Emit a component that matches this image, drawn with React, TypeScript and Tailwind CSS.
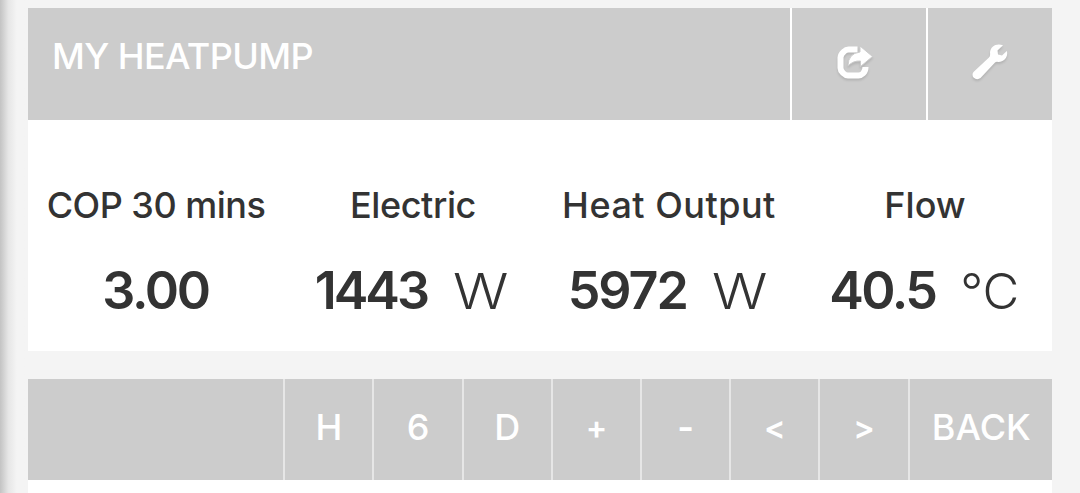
interface Reading {
  label: string;
  labelClass: string;
  value: string;
  valueClass: string;
  unit?: string;
  unitClass?: string;
}

const readings: Reading[] = [
  { label: 'COP 30 mins', labelClass: 'tracking-[-0.5px]', value: '3.00', valueClass: 'tracking-[-2.3px] pr-px' },
  {
    label: 'Electric',
    labelClass: 'tracking-[-0.4px] pl-[2px]',
    value: '1443',
    valueClass: 'tracking-[-3px]',
    unit: 'W',
    unitClass: 'ml-[30px] mr-[5px] scale-x-[1.17]',
  },
  {
    label: 'Heat Output',
    labelClass: 'tracking-[0.5px] pl-[2px]',
    value: '5972',
    valueClass: 'tracking-[-2px]',
    unit: 'W',
    unitClass: 'ml-[29px] mr-[5px] scale-x-[1.17]',
  },
  {
    label: 'Flow',
    labelClass: 'pl-[2px]',
    value: '40.5',
    valueClass: 'tracking-[-2.5px]',
    unit: '°C',
    unitClass: 'ml-[26px] scale-x-[1.03]',
  },
];

const navItems = [
  { label: 'H', className: '' },
  { label: '6', className: '' },
  { label: 'D', className: '' },
  { label: '+', className: 'text-[32px] font-semibold' },
  { label: '-', className: 'font-semibold' },
  { label: '<', className: 'text-[32px] font-semibold' },
  { label: '>', className: 'text-[32px] font-semibold' },
];

function ShareIcon() {
  return (
    <svg width="40" height="40" viewBox="0 0 40 40" className="blur-[0.5px] drop-shadow-[0_2px_1px_rgba(0,0,0,0.12)]">
      <path
        d="M23.500 6.500H14.500Q12 6.500 10 8.500Q6.500 11.500 6.500 14.500V25Q6.500 27.500 9 30Q11.500 32.500 14 32.500H24.500Q27 32.500 29 30.500Q31.500 28 31.500 24"
        fill="none"
        stroke="white"
        strokeWidth="6"
      />
      <path
        d="M26 3L38.500 13.500L26.500 23.500V18Q19 17.500 14 23Q14 10.500 26 9Z"
        fill="white"
        stroke="#ccc"
        strokeWidth="1"
      />
    </svg>
  );
}

function WrenchIcon() {
  return (
    <svg width="40" height="40" viewBox="0 0 40 40" className="blur-[0.5px] drop-shadow-[0_2px_1px_rgba(0,0,0,0.12)]">
      <path
        d="M33 3.200C26.500 .8 20.500 4 20 10.500Q20.500 14 19 15.500L3.500 30Q1.500 32.500 3.500 35.500Q7 38.500 10.500 36L25 20.500Q26 19.500 28.500 20C34 20 38.500 15 36.800 9L32 13.500L28 12.500L27.500 8.500Z"
        fill="white"
      />
    </svg>
  );
}

export default function App() {
  return (
    <div className="flex h-[493px] w-full overflow-hidden bg-[#f4f4f4] font-['Inter',sans-serif] text-[#333]">
      <div className="w-[28px] shrink-0 bg-linear-to-r from-[#c3c3c3] via-[#e6e6e6] via-30% to-[#f4f4f4] to-60%" />
      <main className="w-[1024px] shrink-0 pt-2">
        {/* Header */}
        <header className="flex h-[112px] bg-[#ccc] text-white">
          <h1 className="flex-1 pt-[27px] pl-6 text-[36px] leading-[42px] font-medium tracking-[-0.6px] whitespace-nowrap">
            MY HEATPUMP
          </h1>
          <button className="flex w-[136px] justify-center border-l-2 border-white pt-[35px] pr-[11px]">
            <ShareIcon />
          </button>
          <button className="flex w-[126px] justify-center border-l-2 border-white pt-[34px]">
            <WrenchIcon />
          </button>
        </header>

        {/* Live readings */}
        <section className="grid h-[231px] grid-cols-4 bg-white text-center">
          {readings.map((r) => (
            <div key={r.label} className="pt-[64px] whitespace-nowrap">
              <div className={`text-[36px] leading-[42px] font-medium ${r.labelClass}`}>{r.label}</div>
              <div className="mt-[33px] flex items-baseline justify-center leading-[64px]">
                <span className={`text-[52px] font-semibold ${r.valueClass}`}>{r.value}</span>
                {r.unit && <span className={`text-[49px] font-light ${r.unitClass}`}>{r.unit}</span>}
              </div>
            </div>
          ))}
        </section>

        {/* Graph navigation */}
        <nav className="mt-7 flex h-[101px] bg-[#ccc] text-[36px] leading-[92px] font-medium text-white">
          <div className="w-[255.3px]" />
          {navItems.map((item) => (
            <button key={item.label} className="w-[89.2px] border-l-2 border-[#e6e6e6] pb-[6px]">
              <span className={item.className}>{item.label}</span>
            </button>
          ))}
          <button className="flex-1 border-l-2 border-[#e6e6e6] pb-[6px] pl-px">BACK</button>
        </nav>
        <div className="h-4 bg-white" />
      </main>
    </div>
  );
}
